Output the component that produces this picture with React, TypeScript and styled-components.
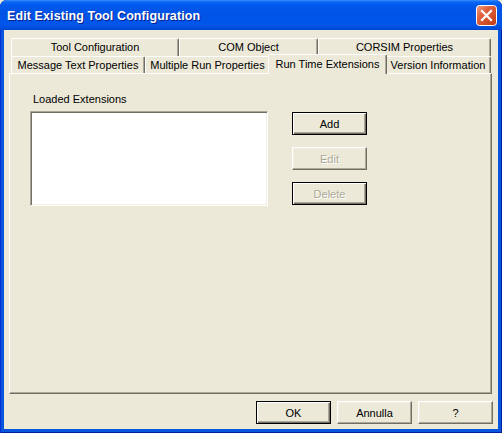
import React from 'react';
import styled, { createGlobalStyle } from 'styled-components';

const Global = createGlobalStyle`
  html, body { margin: 0; padding: 0; background: #ECE9D8; }
  body { font-family: "Liberation Sans", Arial, sans-serif; font-size: 11px; color: #000; }
  #root { width: 502px; height: 433px; }
`;

const Window = styled.div`
  width: 502px;
  height: 433px;
  box-sizing: border-box;
  display: flex;
  flex-direction: column;
  background: #0855DD;
  border-radius: 7px 7px 0 0;
  overflow: hidden;
  box-shadow: inset 1px 0 #0831D9, inset -1px 0 #001EA0, inset 0 -1px #001EA0;
`;

const TitleBar = styled.div`
  height: 30px;
  flex: none;
  box-sizing: border-box;
  display: flex;
  align-items: center;
  padding: 1px 5px 0 7px;
  background: linear-gradient(
    to bottom,
    #3B8DFF 0px,
    #0A66F5 2px,
    #0059ED 5px,
    #0054E5 45%,
    #0055EA 80%,
    #0050E0 92%,
    #0044CC 100%
  );
`;

const Title = styled.div`
  flex: 1;
  color: #fff;
  font-family: "Liberation Sans", Arial, sans-serif;
  font-weight: bold;
  font-size: 12.5px;
  letter-spacing: 0.1px;
  text-shadow: 1px 1px #0A1E8C;
  white-space: nowrap;
`;

const CloseButton = styled.div`
  width: 21px;
  height: 21px;
  flex: none;
  margin-top: -1px;
  display: flex;
`;

const Client = styled.div`
  flex: 1;
  margin: 0 4px 4px 4px;
  background: #ECE9D8;
  display: flex;
  flex-direction: column;
  padding: 8px 5px 5px 5px;
  min-height: 0;
`;

const TabStrip = styled.div`
  display: flex;
  flex-direction: column;
  margin: 0 1px 0 2px;
  flex: none;
`;

const TabRow = styled.div<{ $h: number }>`
  display: flex;
  align-items: flex-start;
  height: ${(p) => p.$h}px;
`;

const Tab = styled.div<{ $w: number; $h: number; $selected?: boolean }>`
  box-sizing: border-box;
  flex: none;
  width: ${(p) => p.$w}px;
  height: ${(p) => p.$h}px;
  background: #ECE9D8;
  border-top: 1px solid #fff;
  border-left: 1px solid #fff;
  border-right: 1px solid #716F64;
  border-radius: 2px 2px 0 0;
  box-shadow: inset -1px 0 #ACA899;
  display: flex;
  justify-content: center;
  padding-top: ${(p) => (p.$selected ? 3 : 2)}px;
  line-height: 13px;
  white-space: nowrap;
  position: relative;
  z-index: ${(p) => (p.$selected ? 2 : 0)};
  margin: ${(p) => (p.$selected ? '-2px -2px 0 -2px' : '0')};
`;

const Panel = styled.div`
  flex: 1;
  box-sizing: border-box;
  margin-right: 1px;
  border-top: 1px solid #fff;
  border-left: 1px solid #fff;
  border-right: 1px solid #716F64;
  border-bottom: 1px solid #716F64;
  box-shadow: inset -1px -1px #ACA899;
  padding: 19px 0 0 20px;
  display: flex;
  align-items: flex-start;
`;

const ListColumn = styled.div`
  display: flex;
  flex-direction: column;
`;

const Label = styled.div`
  height: 13px;
  line-height: 13px;
  margin: 0 0 5px 3px;
`;

const ListBox = styled.div`
  box-sizing: border-box;
  width: 238px;
  height: 95px;
  background: #fff;
  border-top: 1px solid #ACA899;
  border-left: 1px solid #ACA899;
  border-right: 1px solid #fff;
  border-bottom: 1px solid #fff;
  box-shadow: inset 1px 1px #716F64, inset -1px -1px #F1EFE2;
`;

const ButtonColumn = styled.div`
  display: flex;
  flex-direction: column;
  gap: 12px;
  margin: 19px 0 0 24px;
`;

const Button = styled.div<{ $frame?: boolean; $disabled?: boolean }>`
  box-sizing: border-box;
  width: 75px;
  height: 23px;
  background: #ECE9D8;
  display: flex;
  align-items: center;
  justify-content: center;
  padding-top: 1px;
  color: ${(p) => (p.$disabled ? '#ACA899' : '#000')};
  text-shadow: ${(p) => (p.$disabled ? '1px 1px #fff' : 'none')};
  border: 1px solid;
  border-color: ${(p) => (p.$frame ? '#000' : '#fff #716F64 #716F64 #fff')};
  box-shadow: ${(p) =>
    p.$frame
      ? 'inset 1px 1px #fff, inset -1px -1px #716F64, inset -2px -2px #ACA899'
      : 'inset -1px -1px #ACA899, inset 1px 1px #F1EFE2'};
`;

const ButtonRow = styled.div`
  display: flex;
  justify-content: flex-end;
  gap: 6px;
  margin-top: 7px;
  flex: none;
`;

const CloseIcon = () => (
  <svg width="21" height="21" viewBox="0 0 21 21">
    <defs>
      <linearGradient id="cg" x1="0" y1="0" x2="1" y2="1">
        <stop offset="0" stopColor="#F0A38A" />
        <stop offset="0.35" stopColor="#E0633F" />
        <stop offset="1" stopColor="#C23A14" />
      </linearGradient>
    </defs>
    <rect x="0.5" y="0.5" width="20" height="20" rx="3" fill="url(#cg)" stroke="#fff" />
    <path d="M6 6 L15 15 M15 6 L6 15" stroke="#fff" strokeWidth="2.2" strokeLinecap="square" />
  </svg>
);

export default function App() {
  return (
    <>
      <Global />
      <Window>
        <TitleBar>
          <Title>Edit Existing Tool Configuration</Title>
          <CloseButton>
            <CloseIcon />
          </CloseButton>
        </TitleBar>
        <Client>
          <TabStrip>
            <TabRow $h={18}>
              <Tab $w={168} $h={18}>Tool Configuration</Tab>
              <Tab $w={139} $h={18}>COM Object</Tab>
              <Tab $w={173} $h={18}>CORSIM Properties</Tab>
            </TabRow>
            <TabRow $h={17}>
              <Tab $w={134} $h={17}>Message Text Properties</Tab>
              <Tab $w={125} $h={17}>Multiple Run Properties</Tab>
              <Tab $w={119} $h={20} $selected>
                Run Time Extensions
              </Tab>
              <Tab $w={106} $h={17}>Version Information</Tab>
            </TabRow>
          </TabStrip>
          <Panel>
            <ListColumn>
              <Label>Loaded Extensions</Label>
              <ListBox />
            </ListColumn>
            <ButtonColumn>
              <Button $frame>Add</Button>
              <Button $disabled>Edit</Button>
              <Button $frame $disabled>
                Delete
              </Button>
            </ButtonColumn>
          </Panel>
          <ButtonRow>
            <Button $frame>OK</Button>
            <Button>Annulla</Button>
            <Button>?</Button>
          </ButtonRow>
        </Client>
      </Window>
    </>
  );
}
